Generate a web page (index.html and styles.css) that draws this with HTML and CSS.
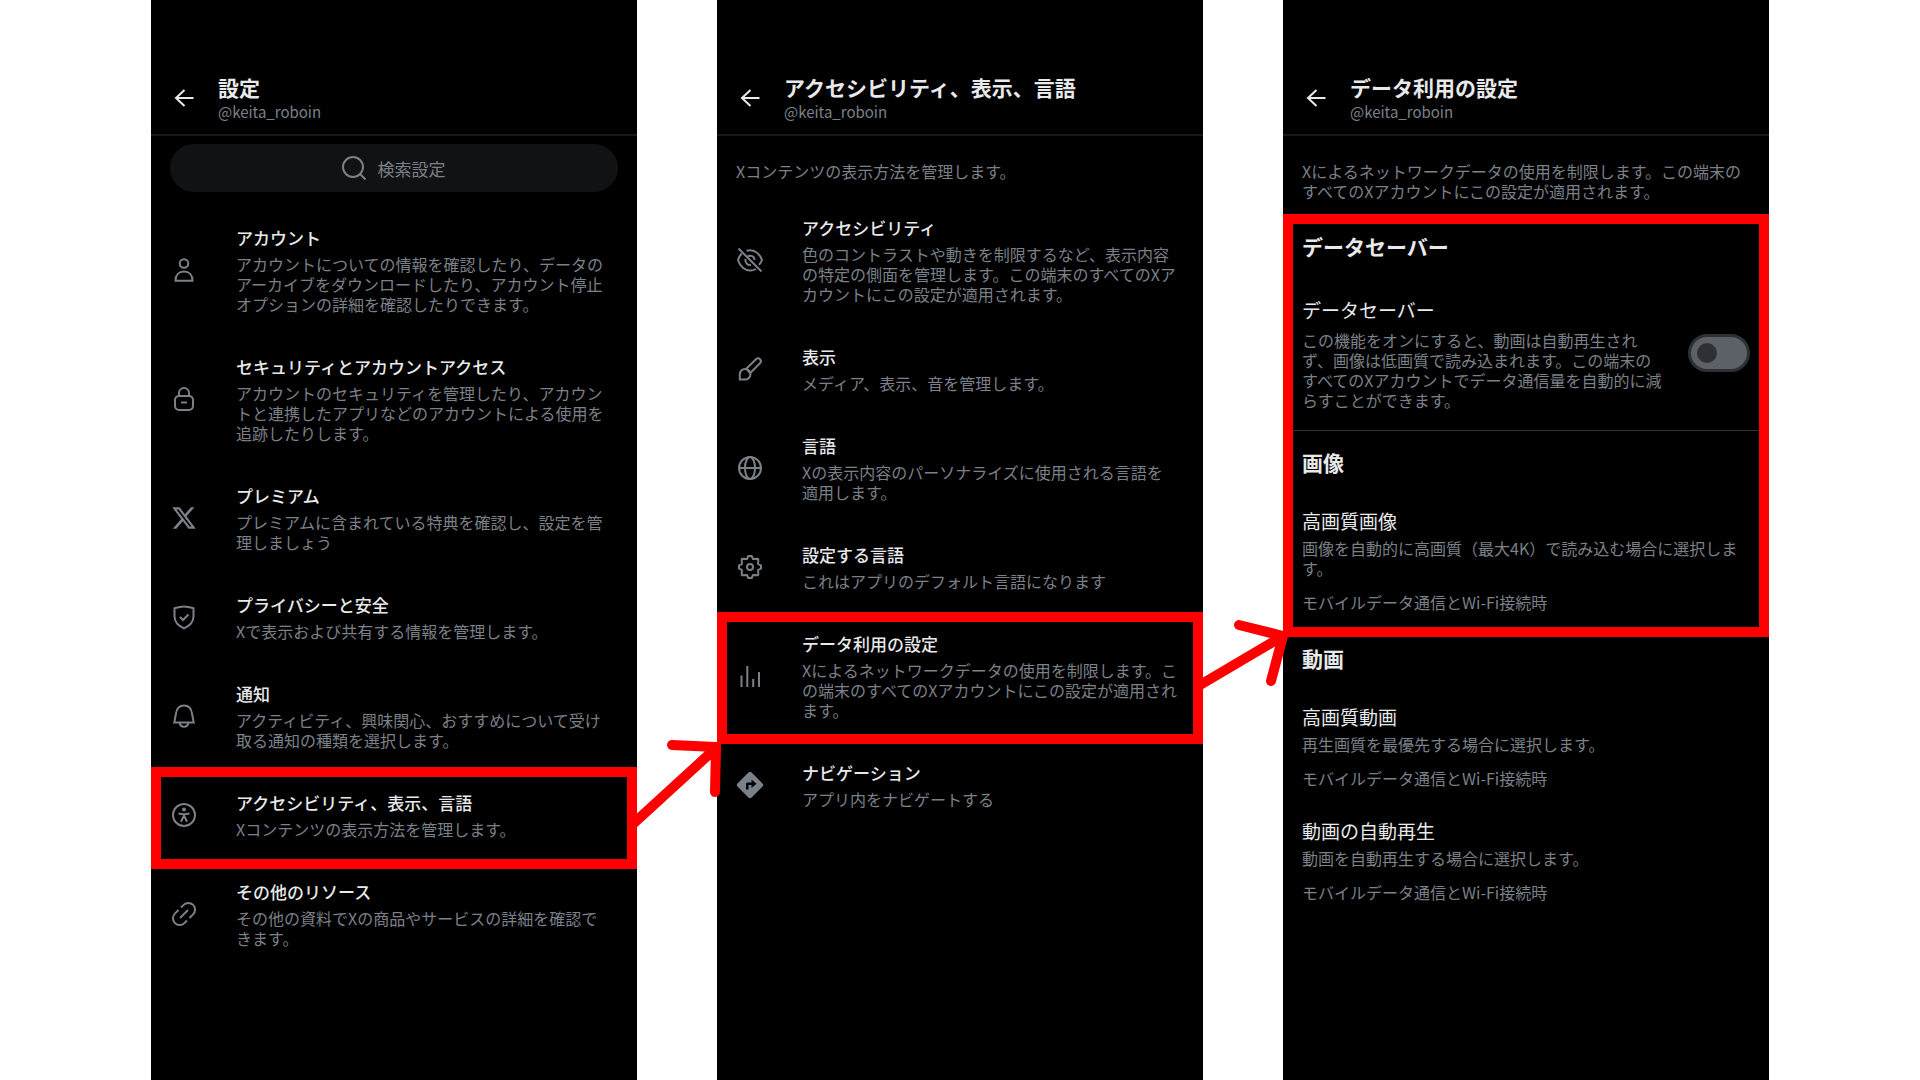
FILE: index.html
```html
<!DOCTYPE html>
<html lang="ja">
<head>
  <meta charset="UTF-8">
  <meta name="viewport" content="width=device-width, initial-scale=1.0">
  <title>データ利用の設定</title>
  <link rel="stylesheet" href="styles.css">
</head>
<body>
  <main class="steps">

    <!-- Step 1: settings -->
    <section class="panel">
      <header class="panel-header">
        <button type="button" class="back" aria-label="戻る">
          <svg class="icon" viewBox="0 0 24 24"><path d="M21.500 12H4M12.500 4L4 12l8.500 8"/></svg>
        </button>
        <div>
          <h1>設定</h1>
          <p class="handle">@keita_roboin</p>
        </div>
      </header>

      <label class="search">
        <svg class="icon" viewBox="0 0 24 24"><circle cx="11" cy="11" r="10"/><path d="M18 18l5.500 5.500"/></svg>
        <input type="text" placeholder="検索設定" aria-label="検索設定">
      </label>

      <nav class="list list-search">
        <a class="item" href="#">
          <svg class="icon" viewBox="0 0 24 24"><circle cx="12" cy="5.500" r="4.300"/><path d="M3.500 22.700c0-5.800 3.500-9.200 8.500-9.200s8.500 3.400 8.500 9.200z"/></svg>
          <div class="item-text">
            <h2>アカウント</h2>
            <p>アカウントについての情報を確認したり、データのアーカイブをダウンロードしたり、アカウント停止オプションの詳細を確認したりできます。</p>
          </div>
        </a>
        <a class="item" href="#">
          <svg class="icon" viewBox="0 0 24 24"><rect x="3" y="9" width="18" height="14" rx="4"/><path d="M7 9V6a5 5 0 0 1 10 0v3M9 15.500h6"/></svg>
          <div class="item-text">
            <h2>セキュリティとアカウントアクセス</h2>
            <p>アカウントのセキュリティを管理したり、アカウントと連携したアプリなどのアカウントによる使用を追跡したりします。</p>
          </div>
        </a>
        <a class="item" href="#">
          <svg class="icon solid" viewBox="1 1 22 22"><path d="M18.244 2.250h3.308l-7.227 8.260 8.502 11.240H16.170l-5.214-6.817L4.990 21.750H1.680l7.730-8.835L1.254 2.250H8.080l4.713 6.231zm-1.161 17.520h1.833L7.084 4.126H5.117z"/></svg>
          <div class="item-text">
            <h2>プレミアム</h2>
            <p>プレミアムに含まれている特典を確認し、設定を管理しましょう</p>
          </div>
        </a>
        <a class="item" href="#">
          <svg class="icon" viewBox="0 0 24 24"><path d="M12 1.500c3 0 6 .8 9.500 1.800v8c0 6-4 9.700-9.500 12-5.500-2.300-9.500-6-9.500-12v-8C6 2.300 9 1.500 12 1.500z"/><path d="M8 12l3 3 5.500-5.500"/></svg>
          <div class="item-text">
            <h2>プライバシーと安全</h2>
            <p>Xで表示および共有する情報を管理します。</p>
          </div>
        </a>
        <a class="item" href="#">
          <svg class="icon" viewBox="0 0 24 24"><path d="M2.300 18.500L4 9.500C4.700 4.500 7.600 1.500 12 1.500s7.300 3 8 8l1.700 9z"/><path d="M7.500 18.500c.5 3 2.300 4.300 4.500 4.300s4-1.300 4.500-4.300"/></svg>
          <div class="item-text">
            <h2>通知</h2>
            <p>アクティビティ、興味関心、おすすめについて受け取る通知の種類を選択します。</p>
          </div>
        </a>
        <a class="item marked mark-access" href="#">
          <svg class="icon" viewBox="0 0 24 24"><circle cx="12" cy="12" r="11"/><circle class="dot" cx="12" cy="6.500" r="2"/><path d="M6.500 10.500c3.500.8 7.500.8 11 0M12 11v3M9 18.800l2.500-5.300h1l2.500 5.300"/></svg>
          <div class="item-text">
            <h2>アクセシビリティ、表示、言語</h2>
            <p>Xコンテンツの表示方法を管理します。</p>
          </div>
        </a>
        <a class="item" href="#">
          <svg class="icon" viewBox="0 0 24 24"><path d="M9 5.500l2.600-2.600A6.700 6.700 0 0 1 21.100 12.400L17.500 16"/><path d="M15 18.500l-2.600 2.600A6.700 6.700 0 0 1 2.900 11.600L6.500 8"/><path d="M8 16l8-8"/></svg>
          <div class="item-text">
            <h2>その他のリソース</h2>
            <p>その他の資料でXの商品やサービスの詳細を確認できます。</p>
          </div>
        </a>
      </nav>
    </section>

    <!-- Step 2: accessibility, display, languages -->
    <section class="panel">
      <header class="panel-header">
        <button type="button" class="back" aria-label="戻る">
          <svg class="icon" viewBox="0 0 24 24"><path d="M21.500 12H4M12.500 4L4 12l8.500 8"/></svg>
        </button>
        <div>
          <h1>アクセシビリティ、表示、言語</h1>
          <p class="handle">@keita_roboin</p>
        </div>
      </header>

      <p class="intro">Xコンテンツの表示方法を管理します。</p>

      <nav class="list">
        <a class="item" href="#">
          <svg class="icon" viewBox="0 0 24 24"><path d="M8.500 2.800c7-2 13 2.200 15.500 9.200-.8 2-1.800 3.600-3 4.900"/><path d="M3.800 5.500C2 7.200.8 9.300 0 12c2 7 7.500 11 13 10.500 2-.2 3.600-.7 5-1.500"/><path d="M9.500 8.500c3-1.800 7-.2 7 3.500M7.500 11c-.8 4 2.500 6.500 5.500 5.800"/><path d="M0.500 0.500l23 23"/></svg>
          <div class="item-text">
            <h2>アクセシビリティ</h2>
            <p>色のコントラストや動きを制限するなど、表示内容の特定の側面を管理します。この端末のすべてのXアカウントにこの設定が適用されます。</p>
          </div>
        </a>
        <a class="item" href="#">
          <svg class="icon" viewBox="0 0 24 24"><path d="M8 12L18 2.200a2.800 2.800 0 0 1 4 4L12 16.300"/><path d="M1.800 22.600v-5.300a5.300 5.300 0 1 1 5.300 5.300z"/><path d="M8.500 12l3.500 3.800"/></svg>
          <div class="item-text">
            <h2>表示</h2>
            <p>メディア、表示、音を管理します。</p>
          </div>
        </a>
        <a class="item" href="#">
          <svg class="icon" viewBox="0 0 24 24"><circle cx="12" cy="12" r="11"/><ellipse cx="12" cy="12" rx="5" ry="11"/><path d="M1 12h22"/></svg>
          <div class="item-text">
            <h2>言語</h2>
            <p>Xの表示内容のパーソナライズに使用される言語を<br>適用します。</p>
          </div>
        </a>
        <a class="item" href="#">
          <svg class="icon" viewBox="0 0 24 24"><path stroke-linejoin="round" d="M10.300 1h3.400l1.200 2.900 4.900-.2.500.5-.2 4.900 2.900 1.200v3.400l-2.900 1.200.2 4.900-.5.500-4.900-.2-1.200 2.900h-3.400l-1.200-2.900-4.900.2-.5-.5.2-4.900L1 13.700v-3.400l2.900-1.200-.2-4.900.5-.5 4.900.2z"/><circle cx="12" cy="12" r="3"/></svg>
          <div class="item-text">
            <h2>設定する言語</h2>
            <p>これはアプリのデフォルト言語になります</p>
          </div>
        </a>
        <a class="item marked mark-data" href="#">
          <svg class="icon" viewBox="0 0 24 24"><path d="M3.500 11.500V23M9.300 2v21M15.200 15v8M21 8v15"/></svg>
          <div class="item-text">
            <h2>データ利用の設定</h2>
            <p>Xによるネットワークデータの使用を制限します。この端末のすべてのXアカウントにこの設定が適用されます。</p>
          </div>
          <svg class="arrow arrow-first" viewBox="0 0 100 90"><path d="M7 86L89 11M45 8l44 2-1 45"/></svg>
        </a>
        <a class="item" href="#">
          <svg class="icon solid" viewBox="0 0 24 24"><path fill-rule="evenodd" d="M10.400-.5a2.300 2.300 0 0 1 3.200 0L24.500 10.400a2.300 2.300 0 0 1 0 3.200L13.600 24.500a2.300 2.300 0 0 1-3.200 0L-.5 13.600a2.300 2.300 0 0 1 0-3.200zM8 16.500h2.500v-4.500h3v3l5-4.200-5-4.300v3H9.500a1.500 1.500 0 0 0-1.500 1.500z"/></svg>
          <div class="item-text">
            <h2>ナビゲーション</h2>
            <p>アプリ内をナビゲートする</p>
          </div>
        </a>
      </nav>
    </section>

    <!-- Step 3: data usage -->
    <section class="panel">
      <header class="panel-header">
        <button type="button" class="back" aria-label="戻る">
          <svg class="icon" viewBox="0 0 24 24"><path d="M21.500 12H4M12.500 4L4 12l8.500 8"/></svg>
        </button>
        <div>
          <h1>データ利用の設定</h1>
          <p class="handle">@keita_roboin</p>
        </div>
      </header>

      <p class="intro">Xによるネットワークデータの使用を制限します。この端末のすべてのXアカウントにこの設定が適用されます。</p>

      <div class="marked mark-saver">
        <h2 class="group-title">データセーバー</h2>
        <div class="saver">
          <div class="saver-text">
            <label class="option-title" for="data-saver">データセーバー</label>
            <p>この機能をオンにすると、動画は自動再生されず、画像は低画質で読み込まれます。この端末のすべてのXアカウントでデータ通信量を自動的に減らすことができます。</p>
          </div>
          <input type="checkbox" class="toggle" id="data-saver">
        </div>

        <h2 class="group-title">画像</h2>
        <a class="option" href="#">
          <h3 class="option-title">高画質画像</h3>
          <p>画像を自動的に高画質（最大4K）で読み込む場合に選択します。</p>
          <p class="option-value">モバイルデータ通信とWi-Fi接続時</p>
        </a>
        <svg class="arrow arrow-second" viewBox="0 0 100 80"><path d="M7 69L90 20M46 9l44 11-12 45"/></svg>
      </div>

      <h2 class="group-title">動画</h2>
      <a class="option" href="#">
        <h3 class="option-title">高画質動画</h3>
        <p>再生画質を最優先する場合に選択します。</p>
        <p class="option-value">モバイルデータ通信とWi-Fi接続時</p>
      </a>
      <a class="option" href="#">
        <h3 class="option-title">動画の自動再生</h3>
        <p>動画を自動再生する場合に選択します。</p>
        <p class="option-value">モバイルデータ通信とWi-Fi接続時</p>
      </a>
    </section>

  </main>
</body>
</html>
```

FILE: styles.css
```css
* {
  box-sizing: border-box;
}

body {
  margin: 0;
  background-color: #fff;
  color: #7b8188;
  font-family: "Noto Sans CJK JP", sans-serif;
  font-size: 16px;
  line-height: 20px;
}

h1,
h2,
h3,
p {
  margin: 0;
}

a {
  color: inherit;
  text-decoration: none;
}

.steps {
  display: grid;
  grid-template-columns: repeat(3, 1fr);
  gap: 80px;
  min-height: 100vh;
  padding: 0 151px;
}

.panel {
  background-color: #000;
}

/* header */
.panel-header {
  display: flex;
  align-items: center;
  gap: 22px;
  padding: 73px 20px 12px 21px;
  border-bottom: 2px solid #16181a;
}

.panel-header h1 {
  color: #e7e9ea;
  font-size: 21px;
  font-weight: 700;
  line-height: 28px;
}

.handle {
  margin-top: 1px;
  font-size: 15px;
}

.back {
  display: flex;
  padding: 0;
  border: none;
  background: none;
  color: #e7e9ea;
  cursor: pointer;
}

.icon {
  flex: none;
  width: 24px;
  height: 24px;
  overflow: visible;
  fill: none;
  stroke: currentColor;
  stroke-width: 2;
}

.icon.solid {
  fill: currentColor;
  stroke: none;
}

.icon .dot {
  fill: currentColor;
  stroke: none;
}

/* search */
.search {
  display: flex;
  align-items: center;
  justify-content: center;
  gap: 12px;
  height: 48px;
  margin: 8px 19px 0;
  border-radius: 24px;
  background-color: #111214;
}

.search input {
  width: 69px;
  padding: 0;
  border: none;
  outline: none;
  background: none;
  color: #7b8188;
  font-family: inherit;
  font-size: 17px;
}

.search input::placeholder {
  color: #7b8188;
}

.intro {
  padding: 25px 19px 14px;
}

/* menu list */
.list-search {
  margin-top: 13px;
}

.item {
  display: flex;
  align-items: center;
  gap: 40px;
  padding: 20px 20px 20px 21px;
}

.list-search .item {
  padding-right: 28px;
}

.item-text {
  flex: 1;
}

.item h2 {
  margin-bottom: 3px;
  color: #e7e9ea;
  font-size: 17px;
  font-weight: 500;
  line-height: 26px;
}

/* data usage */
.group-title {
  padding: 15px 19px;
  color: #e7e9ea;
  font-size: 21px;
  font-weight: 700;
  line-height: 32px;
}

.option-title {
  display: block;
  margin-bottom: 3px;
  color: #e7e9ea;
  font-size: 19px;
  font-weight: 400;
  line-height: 28px;
}

.option {
  display: block;
  padding: 14px 19px 15px;
}

.option-value {
  margin-top: 14px;
}

.saver {
  display: flex;
  align-items: center;
  gap: 22px;
  padding: 19px 19px 20px;
  border-bottom: 1px solid #2f3336;
}

.saver-text {
  flex: 1;
}

.saver .option-title {
  margin-bottom: 6px;
}

.toggle {
  display: flex;
  align-items: center;
  appearance: none;
  flex: none;
  width: 62px;
  height: 38px;
  margin: 0;
  padding-left: 6px;
  border: 3px solid #2f3033;
  border-radius: 19px;
  background-color: #5b6167;
  cursor: pointer;
}

.toggle::before {
  content: "";
  width: 20px;
  height: 20px;
  border-radius: 50%;
  background-color: #2f3033;
}

.toggle:checked {
  justify-content: flex-end;
  padding: 0 6px;
}

/* red frames and arrows drawn over the screens */
.marked {
  position: relative;
}

.marked::after {
  content: "";
  position: absolute;
  border: 10px solid #f00;
  pointer-events: none;
}

.mark-access::after {
  inset: -3px 0 -10px;
}

.mark-data::after {
  inset: 1px 0 -4px;
}

.mark-saver::after {
  inset: -1px 0 -10px;
}

.arrow {
  position: absolute;
  left: -90px;
  width: 100px;
  fill: none;
  stroke: #f00;
  stroke-width: 10;
  stroke-linecap: round;
  stroke-linejoin: miter;
  pointer-events: none;
}

.arrow-first {
  top: 126px;
  height: 90px;
}

.arrow-second {
  bottom: -69px;
  height: 80px;
}
```
